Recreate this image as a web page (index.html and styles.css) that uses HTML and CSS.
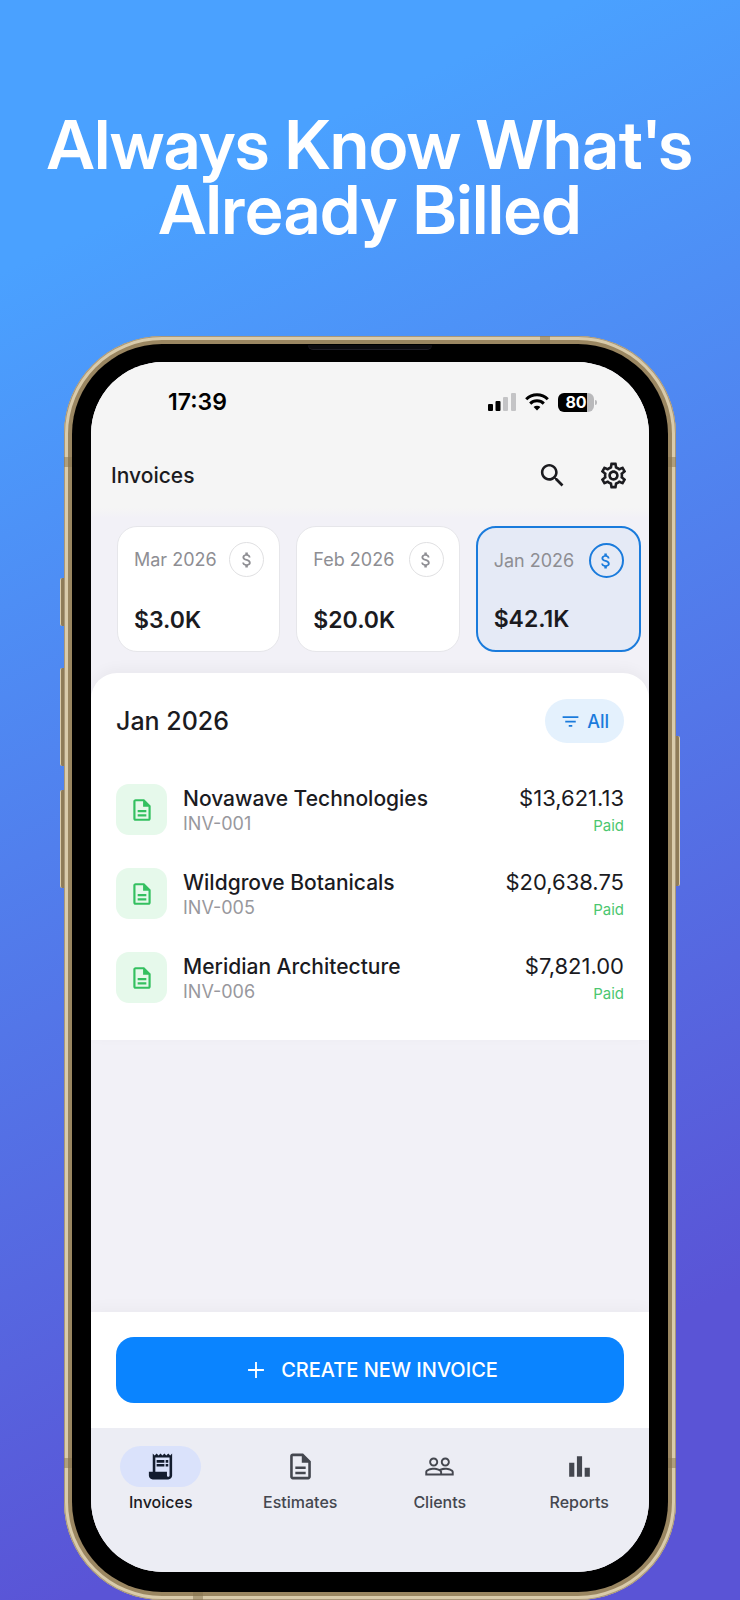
FILE: index.html
```html
<!DOCTYPE html>
<html lang="en">
<head>
    <meta charset="UTF-8">
    <meta name="viewport" content="width=device-width, initial-scale=1.0">
    <title>Invoices</title>
    <link rel="stylesheet" href="styles.css">
</head>
<body>
    <svg class="sprite" aria-hidden="true">
        <symbol id="doc" viewBox="0 0 24 24"><path d="M8 16h8v2H8zm0-4h8v2H8zm6-10H6c-1.1 0-2 .9-2 2v16c0 1.1.89 2 1.99 2H18c1.1 0 2-.9 2-2V8l-6-6zm4 18H6V4h7v5h5v11z"/></symbol>
        <symbol id="money" viewBox="0 0 24 24"><path d="M11.8 10.9c-2.27-.59-3-1.2-3-2.15 0-1.09 1.01-1.85 2.7-1.85 1.78 0 2.44.85 2.5 2.1h2.21c-.07-1.72-1.12-3.3-3.21-3.81V3h-3v2.16c-1.94.42-3.5 1.68-3.5 3.61 0 2.31 1.91 3.46 4.7 4.13 2.5.6 3 1.48 3 2.41 0 .69-.49 1.79-2.7 1.79-2.06 0-2.87-.92-2.98-2.1h-2.2c.12 2.19 1.76 3.42 3.68 3.83V21h3v-2.15c1.95-.37 3.5-1.5 3.5-3.55 0-2.84-2.43-3.81-4.7-4.4z"/></symbol>
    </svg>

    <h1>Always Know What's<br>Already Billed</h1>

    <div class="phone">
        <span class="key key-action"></span>
        <span class="key key-up"></span>
        <span class="key key-down"></span>
        <span class="key key-power"></span>
        <span class="band band-left band-high"></span>
        <span class="band band-right band-high"></span>
        <span class="band band-left band-low"></span>
        <span class="band band-right band-low"></span>
        <span class="band band-top"></span>
        <span class="band band-bottom"></span>

        <div class="bezel">
            <span class="speaker"></span>
            <div class="screen">
                <div class="status-bar">
                    <span class="clock">17:39</span>
                    <div class="status-icons">
                        <svg width="28" height="18" viewBox="0 0 28 18">
                            <rect x="0" y="11" width="5" height="7" rx="1"/>
                            <rect x="7.500" y="8" width="5" height="10" rx="1"/>
                            <rect x="15" y="4" width="5" height="14" rx="1" fill="#c4c4c6"/>
                            <rect x="23" y="0" width="5" height="18" rx="1" fill="#c4c4c6"/>
                        </svg>
                        <svg width="24" height="18" viewBox="0 0 24 18" fill="none">
                            <path d="M1.200 6.200a15.400 15.400 0 0 1 21.600 0M5.200 10.600a9.600 9.600 0 0 1 13.600 0" fill="none" stroke="#000" stroke-width="3"/>
                            <path d="M12 17.600l-3.400-3.500a4.800 4.800 0 0 1 6.800 0z" fill="#000"/>
                        </svg>
                        <div class="battery">80</div>
                    </div>
                </div>

                <header class="app-bar">
                    <h2>Invoices</h2>
                    <button class="icon-button" aria-label="Search">
                        <svg class="icon" viewBox="0 0 24 24"><path d="M15.500 14h-.79l-.28-.27C15.410 12.590 16 11.110 16 9.500 16 5.910 13.090 3 9.500 3S3 5.910 3 9.500 5.910 16 9.500 16c1.610 0 3.090-.59 4.230-1.570l.27.28v.79l5 4.990L20.490 19l-4.990-5zm-6 0C7.010 14 5 11.990 5 9.500S7.010 5 9.500 5 14 7.010 14 9.500 11.990 14 9.500 14z"/></svg>
                    </button>
                    <button class="icon-button" aria-label="Settings">
                        <svg class="icon" viewBox="0 0 24 24"><path d="M19.430 12.980c.04-.32.07-.64.07-.98 0-.34-.03-.66-.07-.98l2.110-1.650c.19-.15.24-.42.12-.64l-2-3.460c-.09-.16-.26-.25-.44-.25-.06 0-.12.010-.17.030l-2.490 1c-.52-.4-1.080-.73-1.690-.98l-.38-2.650C14.460 2.180 14.250 2 14 2h-4c-.25 0-.46.18-.49.42l-.38 2.650c-.61.25-1.170.59-1.690.98l-2.490-1c-.06-.02-.12-.03-.18-.03-.17 0-.34.090-.43.25l-2 3.460c-.13.22-.07.49.12.64l2.110 1.650c-.04.32-.07.65-.07.98 0 .33.030.66.070.98l-2.110 1.650c-.19.15-.24.42-.12.64l2 3.460c.09.16.26.25.44.25.06 0 .12-.01.17-.03l2.490-1c.52.4 1.080.73 1.690.98l.38 2.650c.03.24.24.42.49.42h4c.25 0 .46-.18.49-.42l.38-2.650c.61-.25 1.170-.59 1.690-.98l2.490 1c.06.020.12.030.18.030.17 0 .34-.09.43-.25l2-3.460c.12-.22.07-.49-.12-.64l-2.110-1.650zm-1.980-1.710c.04.31.05.52.05.73 0 .21-.02.43-.05.73l-.14 1.130.89.7 1.080.84-.7 1.210-1.270-.51-1.040-.42-.9.68c-.43.32-.84.56-1.250.73l-1.060.43-.16 1.130-.2 1.350h-1.400l-.19-1.350-.16-1.130-1.060-.43c-.43-.18-.83-.41-1.230-.71l-.91-.7-1.060.43-1.270.51-.7-1.210 1.080-.84.89-.7-.14-1.130c-.03-.31-.05-.54-.05-.74s.02-.43.05-.73l.14-1.130-.89-.7-1.080-.84.7-1.210 1.270.51 1.040.42.9-.68c.43-.32.84-.56 1.250-.73l1.060-.43.16-1.130.2-1.350h1.390l.19 1.350.16 1.130 1.060.43c.43.18.83.41 1.230.71l.91.7 1.060-.43 1.270-.51.7 1.210-1.070.85-.89.7.14 1.130zM12 8c-2.210 0-4 1.790-4 4s1.790 4 4 4 4-1.790 4-4-1.790-4-4-4zm0 6c-1.100 0-2-.9-2-2s.9-2 2-2 2 .9 2 2-.9 2-2 2z"/></svg>
                    </button>
                </header>

                <div class="months">
                    <button class="month">
                        <span class="month-top">Mar 2026 <span class="coin"><svg viewBox="0 0 24 24"><use href="#money"/></svg></span></span>
                        <strong>$3.0K</strong>
                    </button>
                    <button class="month">
                        <span class="month-top">Feb 2026 <span class="coin"><svg viewBox="0 0 24 24"><use href="#money"/></svg></span></span>
                        <strong>$20.0K</strong>
                    </button>
                    <button class="month active">
                        <span class="month-top">Jan 2026 <span class="coin"><svg viewBox="0 0 24 24"><use href="#money"/></svg></span></span>
                        <strong>$42.1K</strong>
                    </button>
                </div>

                <main class="sheet">
                    <div class="sheet-header">
                        <h3>Jan 2026</h3>
                        <button class="filter">
                            <svg viewBox="0 0 24 24"><path d="M10 18h4v-2h-4v2zM3 6v2h18V6H3zm3 7h12v-2H6v2z"/></svg>
                            All
                        </button>
                    </div>
                    <ul class="invoices">
                        <li>
                            <span class="doc"><svg viewBox="0 0 24 24"><use href="#doc"/></svg></span>
                            <div class="client">
                                <p class="name">Novawave Technologies</p>
                                <p class="number">INV-001</p>
                            </div>
                            <div class="total">
                                <p class="amount">$13,621.13</p>
                                <p class="paid">Paid</p>
                            </div>
                        </li>
                        <li>
                            <span class="doc"><svg viewBox="0 0 24 24"><use href="#doc"/></svg></span>
                            <div class="client">
                                <p class="name">Wildgrove Botanicals</p>
                                <p class="number">INV-005</p>
                            </div>
                            <div class="total">
                                <p class="amount">$20,638.75</p>
                                <p class="paid">Paid</p>
                            </div>
                        </li>
                        <li>
                            <span class="doc"><svg viewBox="0 0 24 24"><use href="#doc"/></svg></span>
                            <div class="client">
                                <p class="name">Meridian Architecture</p>
                                <p class="number">INV-006</p>
                            </div>
                            <div class="total">
                                <p class="amount">$7,821.00</p>
                                <p class="paid">Paid</p>
                            </div>
                        </li>
                    </ul>
                </main>

                <div class="create-bar">
                    <button class="create">
                        <svg viewBox="0 0 24 24"><path d="M18.800 12.800h-6v6h-1.600v-6h-6v-1.600h6v-6h1.600v6h6z"/></svg>
                        CREATE NEW INVOICE
                    </button>
                </div>

                <nav class="tabs">
                    <a href="#" class="tab current">
                        <span class="tab-icon"><svg class="icon" viewBox="0 0 24 24"><path d="M19.500 3.500L18 2l-1.500 1.500L15 2l-1.500 1.500L12 2l-1.500 1.500L9 2 7.500 3.500 6 2v14H3v3c0 1.660 1.340 3 3 3h12c1.660 0 3-1.340 3-3V2l-1.500 1.500zM19 19c0 .55-.45 1-1 1s-1-.45-1-1v-3H8V5h11v14z"/><path d="M9 7h6v2H9zM16 7h2v2h-2zM9 10h6v2H9zM16 10h2v2h-2z"/></svg></span>
                        Invoices
                    </a>
                    <a href="#" class="tab">
                        <span class="tab-icon"><svg class="icon" viewBox="0 0 24 24"><use href="#doc"/></svg></span>
                        Estimates
                    </a>
                    <a href="#" class="tab">
                        <span class="tab-icon"><svg class="icon" viewBox="0 0 24 24"><path d="M16.500 13c-1.200 0-3.070.34-4.500 1-1.430-.67-3.300-1-4.500-1C5.330 13 1 14.080 1 16.250V19h22v-2.750c0-2.170-4.330-3.250-6.500-3.250zm-4 4.500h-10v-1.250c0-.54 2.560-1.750 5-1.750s5 1.210 5 1.750v1.250zm9 0H14v-1.250c0-.46-.2-.86-.52-1.220.88-.3 1.960-.53 3.020-.53 2.440 0 5 1.210 5 1.750v1.250zM7.500 12c1.930 0 3.500-1.570 3.500-3.500S9.430 5 7.500 5 4 6.570 4 8.500 5.570 12 7.500 12zm0-5.500c.55 0 1.050.22 1.410.59.38.36.59.86.59 1.410 0 1.100-.9 2-2 2s-2-.9-2-2 .9-2 2-2zm9 5.500c1.930 0 3.500-1.570 3.500-3.500S18.430 5 16.500 5 13 6.570 13 8.500s1.570 3.500 3.500 3.500zm0-5.500c1.100 0 2 .9 2 2s-.9 2-2 2-2-.9-2-2 .9-2 2-2z"/></svg></span>
                        Clients
                    </a>
                    <a href="#" class="tab">
                        <span class="tab-icon"><svg class="icon" viewBox="0 0 24 24"><path d="M4 9h4v11H4zm12 4h4v7h-4zm-6-9h4v16h-4z"/></svg></span>
                        Reports
                    </a>
                </nav>
            </div>
        </div>
    </div>
</body>
</html>
```
FILE: styles.css
```css
* {
    box-sizing: border-box;
}
body {
    margin: 0;
    min-height: 100vh;
    display: flex;
    flex-direction: column;
    background: linear-gradient(155deg, #4aa1ff 14%, #5a54d6 84%);
    font-family: Inter, "Liberation Sans", sans-serif;
    color: #1b1b1f;
}
h1, h2, h3, p, ul {
    margin: 0;
    padding: 0;
}
button {
    font: inherit;
    color: inherit;
    border: none;
    background: none;
    padding: 0;
    cursor: pointer;
}
svg {
    fill: currentColor;
    flex: none;
}
.sprite {
    position: absolute;
    width: 0;
    height: 0;
}
h1 {
    padding: 112px 0 94px;
    text-align: center;
    font-family: "Inter Display", Inter, "Liberation Sans", sans-serif;
    font-size: 68px;
    line-height: 65px;
    font-weight: 600;
    color: #fff;
}

/* Phone body */
.phone {
    position: relative;
    flex: 1;
    display: flex;
    margin: 0 64px;
    padding: 8px;
    border-radius: 98px;
    background: #9a8661;
    box-shadow: inset 0 0 0 1px #a8977a, inset 0 0 0 4px #d9cbab;
}
.bezel {
    position: relative;
    flex: 1;
    display: flex;
    padding: 18px 19px 20px;
    border-radius: 90px;
    background: #000;
}
.speaker {
    position: absolute;
    top: 1px;
    left: 50%;
    width: 124px;
    height: 5px;
    margin-left: -62px;
    border-radius: 0 0 5px 5px;
    background: #0c0b10;
    border-bottom: 1px solid #1f1d26;
}
.key {
    position: absolute;
    left: -4px;
    width: 4px;
    border-radius: 2px 0 0 2px;
    background: #8e7b58;
    border-left: 1px solid #d9cbab;
}
.key-action {
    top: 242px;
    height: 48px;
}
.key-up {
    top: 332px;
    height: 98px;
}
.key-down {
    top: 454px;
    height: 98px;
}
.key-power {
    left: auto;
    right: -4px;
    top: 400px;
    height: 150px;
    border-left: none;
    border-right: 1px solid #d9cbab;
    border-radius: 0 2px 2px 0;
}
.band {
    position: absolute;
    width: 8px;
    height: 10px;
    background: #85734f;
    opacity: .5;
}
.band-left {
    left: 0;
}
.band-right {
    right: 0;
}
.band-high {
    top: 121px;
}
.band-low {
    bottom: 132px;
}
.band-top, .band-bottom {
    width: 10px;
    height: 8px;
}
.band-top {
    top: 0;
    right: 126px;
}
.band-bottom {
    bottom: 0;
    left: 129px;
}

/* App */
.screen {
    flex: 1;
    min-width: 0;
    display: flex;
    flex-direction: column;
    overflow: hidden;
    border-radius: 72px;
    background: #f2f1f7;
}
.status-bar {
    display: flex;
    justify-content: space-between;
    align-items: center;
    height: 80px;
    padding: 0 51px 0 77px;
    background: #f5f5f5;
    color: #000;
}
.clock {
    font-size: 23px;
    font-weight: 600;
}
.status-icons {
    display: flex;
    align-items: center;
    gap: 9px;
}
.battery {
    position: relative;
    width: 36px;
    height: 19px;
    margin-right: 4px;
    border-radius: 6px;
    background: linear-gradient(90deg, #000 80%, #b9b9bb 80%);
    color: #fff;
    font-size: 16px;
    line-height: 19px;
    font-weight: 700;
    text-align: center;
}
.battery::after {
    content: "";
    position: absolute;
    right: -3px;
    top: 7px;
    width: 2px;
    height: 5px;
    border-radius: 0 2px 2px 0;
    background: #b9b9bb;
}
.app-bar {
    display: flex;
    align-items: center;
    gap: 30px;
    height: 66px;
    padding: 0 20px;
    background: #f5f5f5;
}
.app-bar h2 {
    flex: 1;
    font-size: 21px;
    font-weight: 500;
}
.icon-button {
    display: flex;
}
.icon {
    width: 31px;
    height: 31px;
}
.months {
    display: flex;
    gap: 16px;
    padding: 18px 8px 21px 26px;
    background: linear-gradient(#f5f5f5, #f2f1f7 10px);
}
.month {
    flex: 1;
    display: flex;
    flex-direction: column;
    justify-content: space-between;
    height: 126px;
    padding: 15px 15px 15px 16px;
    border: 1px solid #e6e6ea;
    border-radius: 20px;
    background: #fff;
    text-align: left;
}
.month-top {
    display: flex;
    justify-content: space-between;
    align-items: center;
    font-size: 18px;
    color: #8e8e93;
    white-space: nowrap;
}
.month strong {
    font-size: 23px;
    line-height: 32px;
    font-weight: 600;
}
.coin {
    display: flex;
    align-items: center;
    justify-content: center;
    width: 35px;
    height: 35px;
    border: 1px solid #e0e0e2;
    border-radius: 50%;
}
.coin svg {
    width: 20px;
    height: 20px;
}
.month.active {
    border: 2px solid #1a7bdc;
    background: #e5eaf6;
}
.active .coin {
    border: 2px solid #1a7bdc;
    color: #1a7bdc;
}
.sheet {
    padding: 26px 25px 37px;
    border-radius: 26px 26px 0 0;
    background: #fff;
    box-shadow: 0 -4px 14px rgba(0, 0, 0, .04);
}
.sheet-header {
    display: flex;
    justify-content: space-between;
    align-items: center;
    margin-bottom: 41px;
}
.sheet-header h3 {
    font-size: 25px;
    font-weight: 500;
}
.filter {
    display: flex;
    align-items: center;
    gap: 6px;
    height: 44px;
    padding: 0 15px;
    border-radius: 22px;
    background: #e4f1fd;
    color: #1a7bdc;
    font-size: 18px;
    font-weight: 500;
}
.filter svg {
    width: 21px;
    height: 21px;
}
.invoices {
    display: flex;
    flex-direction: column;
    gap: 33px;
    list-style: none;
}
.invoices li {
    display: flex;
    align-items: flex-start;
    height: 51px;
}
.doc {
    display: flex;
    align-items: center;
    justify-content: center;
    width: 51px;
    height: 51px;
    margin-right: 16px;
    border-radius: 13px;
    background: #e6f9eb;
    color: #34c060;
}
.doc svg {
    width: 26px;
    height: 26px;
}
.client {
    flex: 1;
}
.name {
    font-size: 21px;
    line-height: 30px;
    font-weight: 500;
}
.number {
    font-size: 18px;
    line-height: 20px;
    color: #98989d;
}
.total {
    text-align: right;
}
.amount {
    font-size: 22px;
    line-height: 28px;
}
.paid {
    font-size: 15px;
    line-height: 28px;
    color: #4cc76f;
}
.create-bar {
    margin-top: auto;
    padding: 25px;
    background: #fff;
    box-shadow: 0 -4px 14px rgba(0, 0, 0, .03);
}
.create {
    display: flex;
    align-items: center;
    justify-content: center;
    gap: 11px;
    width: 100%;
    height: 66px;
    border-radius: 18px;
    background: #0a84ff;
    color: #fff;
    font-size: 20px;
    font-weight: 500;
}
.create svg {
    width: 28px;
    height: 28px;
}
.tabs {
    display: flex;
    height: 144px;
    padding-top: 18px;
    background: #ecedf4;
}
.tab {
    flex: 1;
    display: flex;
    flex-direction: column;
    align-items: center;
    gap: 5px;
    color: #44474f;
    font-size: 16px;
    line-height: 20px;
    font-weight: 500;
    text-decoration: none;
}
.tab-icon {
    display: flex;
    align-items: center;
    justify-content: center;
    width: 81px;
    height: 41px;
    border-radius: 21px;
}
.current {
    color: #1b1b1f;
}
.current .tab-icon {
    background: #dae2fb;
    color: #131c2e;
}
```
